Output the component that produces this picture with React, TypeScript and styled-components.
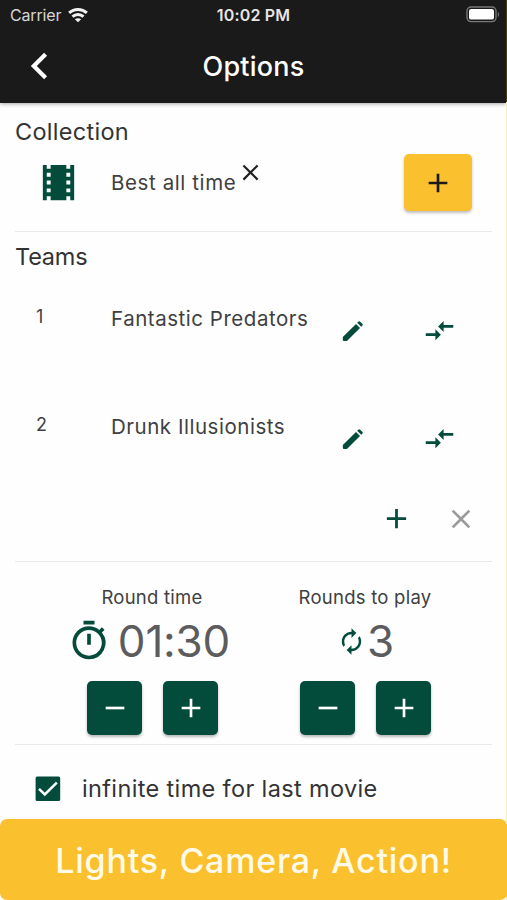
import React from "react";
import styled, { createGlobalStyle } from "styled-components";
import {
  MdAdd,
  MdAutorenew,
  MdClose,
  MdCompareArrows,
  MdOutlineTimer,
  MdRemove,
  MdTheaters,
} from "react-icons/md";

const green = "#034c3c";
const amber = "#fbc02d";

const GlobalStyle = createGlobalStyle`
  * { box-sizing: border-box; }
  body {
    margin: 0;
    background: #fefefe;
    font-family: Inter, "Liberation Sans", sans-serif;
    color: #333335;
  }
  button { border: 0; padding: 0; margin: 0; background: none; font: inherit; color: inherit; }
  svg { display: block; flex: none; }
`;

const Screen = styled.div`
  width: 507px;
  height: 900px;
  display: flex;
  flex-direction: column;
  background: #fefefe;
  border-right: 1px solid #fbecc0;
  border-image: linear-gradient(
      to bottom,
      #4b3b12 103px,
      #fbecc0 103px,
      #fbecc0 823px,
      ${amber} 823px,
      ${amber} 896px,
      #fbecc0 896px
    )
    1;
  overflow: hidden;
`;

const Header = styled.header`
  height: 103px;
  flex: none;
  background: #1a1a1a;
  color: #fff;
  box-shadow: 0 1px 4px rgba(0, 0, 0, 0.35);
`;

const StatusBar = styled.div`
  height: 30px;
  display: grid;
  grid-template-columns: 1fr auto 1fr;
  align-items: center;
  padding: 0 6px 1px 10px;
`;

const Carrier = styled.div`
  display: flex;
  align-items: center;
  gap: 7px;
  font-size: 16px;
  letter-spacing: -0.15px;
  color: #d6d6d6;
`;

const Clock = styled.div`
  margin-left: -3px;
  font-size: 16px;
  font-weight: 600;
  letter-spacing: 0.2px;
  color: #e6e6e6;
`;

const BatterySlot = styled.div`
  display: flex;
  justify-content: flex-end;
`;

const NavBar = styled.div`
  height: 72px;
  display: grid;
  grid-template-columns: 78px 1fr 77px;
  align-items: center;
`;

const BackButton = styled.button`
  display: flex;
  justify-content: center;
`;

const Title = styled.h1`
  margin: 0;
  text-align: center;
  font-size: 27px;
  font-weight: 500;
  letter-spacing: 0.2px;
`;

const Content = styled.main`
  flex: 1;
  min-height: 0;
  padding: 0 14px 0 15px;
`;

const Section = styled.section<{ $height: number }>`
  height: ${(p) => p.$height}px;
  border-bottom: 1px solid #e9e9e9;
`;

const Heading = styled.h2<{ $top: number; $spacing: number }>`
  margin: 0;
  padding-top: ${(p) => p.$top}px;
  font-size: 23.5px;
  line-height: 30px;
  font-weight: 400;
  letter-spacing: ${(p) => p.$spacing}px;
`;

const CollectionRow = styled.div`
  display: flex;
  align-items: center;
  height: 71px;
  padding: 0 20px;
  color: ${green};
`;

const CollectionName = styled.span`
  margin-left: 29px;
  font-size: 20.5px;
  letter-spacing: 0.6px;
  color: #404042;
`;

const RemoveButton = styled.button`
  margin: -20px auto 0 1px;
  color: #222;
`;

const AddCollection = styled.button`
  width: 68px;
  height: 57px;
  display: grid;
  place-items: center;
  border-radius: 5px;
  background: ${amber};
  color: #1a1a1a;
  box-shadow: 0 2px 3px rgba(0, 0, 0, 0.25);
`;

const TeamRow = styled.div`
  display: grid;
  grid-template-columns: 75px 1fr 87px 87px;
  height: 108px;
  padding: 28px 9px 0 21px;
  color: #404042;
`;

const TeamNumber = styled.span`
  font-size: 18px;
  line-height: 34px;
`;

const TeamName = styled.span`
  font-size: 20.5px;
  line-height: 38px;
  letter-spacing: 0.53px;
  white-space: nowrap;
`;

const IconButton = styled.button<{ $muted?: boolean }>`
  height: 61px;
  display: grid;
  place-items: center;
  color: ${(p) => (p.$muted ? "#9b9b9b" : green)};
`;

const TeamActions = styled.div`
  display: flex;
  justify-content: flex-end;
  gap: 32px;
  padding-right: 15px;
`;

const Counters = styled.div`
  display: flex;
  height: 100%;
  padding: 0 20px 0 31px;
`;

const Counter = styled.div`
  flex: 1;
  display: flex;
  flex-direction: column;
  align-items: center;
  padding-top: 20px;
`;

const CounterLabel = styled.div`
  margin-left: -1px;
  font-size: 18.5px;
  line-height: 30px;
  letter-spacing: 0.25px;
  color: #404042;
`;

const CounterValue = styled.div<{ $gap: number; $inset?: number }>`
  height: 58px;
  display: flex;
  align-items: center;
  gap: ${(p) => p.$gap}px;
  padding-right: ${(p) => p.$inset ?? 0}px;
  color: ${green};
`;

const Digits = styled.span`
  font-size: 44px;
  line-height: 58px;
  letter-spacing: -0.2px;
  color: #5c5c5e;
`;

const Stepper = styled.div`
  display: flex;
  gap: 21px;
  margin-top: 11px;
`;

const StepButton = styled.button`
  width: 55px;
  height: 54px;
  display: grid;
  place-items: center;
  border-radius: 5px;
  background: ${green};
  color: #fff;
  box-shadow: 0 2px 3px rgba(0, 0, 0, 0.28);
`;

const Option = styled.label`
  display: flex;
  align-items: center;
  gap: 21px;
  height: 74px;
  padding: 13px 0 0 20px;
  font-size: 23.5px;
  letter-spacing: 0.36px;
`;

const StartButton = styled.button`
  height: 81px;
  flex: none;
  margin-right: -1px;
  padding-top: 1px;
  border-radius: 7px;
  background: ${amber};
  color: #fffbe8;
  font-size: 34px;
  font-weight: 550;
  letter-spacing: 0.78px;
`;

const WifiIcon = () => (
  <svg width="20" height="16" viewBox="0 0 21 16" fill="none" stroke="#f2f2f2" strokeWidth="3.1">
    <path d="M1.2 5.8C6.4.9 14.6.9 19.8 5.8" />
    <path d="M4.7 9.8c3.3-3 8.3-3 11.6 0" />
    <path d="M10.5 15.6l-3.3-3.1c1.9-1.5 4.7-1.5 6.6 0z" fill="#f2f2f2" stroke="none" />
  </svg>
);

const BatteryIcon = () => (
  <svg width="34" height="17" viewBox="0 0 34 17">
    <rect x="1" y="1" width="29" height="14.6" rx="4" fill="none" stroke="#777" strokeWidth="1.4" />
    <rect x="3" y="3" width="25" height="10.6" rx="2.2" fill="#fff" />
    <path d="M31.8 6v5c1.6-.6 1.6-4.4 0-5z" fill="#777" />
  </svg>
);

const BackIcon = () => (
  <svg width="18" height="28" viewBox="0 0 18 28" fill="none" stroke="#fff" strokeWidth="4.2">
    <path d="M15.6 2.2 3.8 14l11.8 11.8" />
  </svg>
);

const PencilIcon = () => (
  <svg width="22" height="22" viewBox="0 0 22 22" fill="currentColor">
    <path d="M.8 17 14 3.9l4 4L4.9 21H2q-1.2 0-1.2-1.2z" />
    <path d="m15.2 2.7 1-1q1-1 2 0l2.1 2.1q1 1 0 2l-1.1 1z" />
  </svg>
);

const CheckboxIcon = () => (
  <svg width="26" height="26" viewBox="0 0 26 26">
    <rect x=".6" y=".4" width="24.6" height="24.6" rx="1.5" fill={green} />
    <path d="m4 12.8 5.8 5.6L21.8 6.6" fill="none" stroke="#fff" strokeWidth="2.5" />
  </svg>
);

const teams = ["Fantastic Predators", "Drunk Illusionists"];

export default function App() {
  return (
    <Screen>
      <GlobalStyle />
      <Header>
        <StatusBar>
          <Carrier>
            Carrier
            <WifiIcon />
          </Carrier>
          <Clock>10:02 PM</Clock>
          <BatterySlot>
            <BatteryIcon />
          </BatterySlot>
        </StatusBar>
        <NavBar>
          <BackButton aria-label="Back">
            <BackIcon />
          </BackButton>
          <Title>Options</Title>
        </NavBar>
      </Header>
      <Content>
        <Section $height={129}>
          <Heading $top={14} $spacing={0.28}>Collection</Heading>
          <CollectionRow>
            <MdTheaters size={47} />
            <CollectionName>Best all time</CollectionName>
            <RemoveButton aria-label="Remove collection">
              <MdClose size={27} />
            </RemoveButton>
            <AddCollection aria-label="Add collection">
              <MdAdd size={32} />
            </AddCollection>
          </CollectionRow>
        </Section>
        <Section $height={330}>
          <Heading $top={10} $spacing={-0.2}>Teams</Heading>
          {teams.map((name, i) => (
            <TeamRow key={name}>
              <TeamNumber>{i + 1}</TeamNumber>
              <TeamName>{name}</TeamName>
              <IconButton aria-label="Edit team">
                <PencilIcon />
              </IconButton>
              <IconButton aria-label="Swap team">
                <MdCompareArrows size={33} />
              </IconButton>
            </TeamRow>
          ))}
          <TeamActions>
            <IconButton aria-label="Add team">
              <MdAdd size={33} />
            </IconButton>
            <IconButton aria-label="Remove team" $muted>
              <MdClose size={32} />
            </IconButton>
          </TeamActions>
        </Section>
        <Section $height={183}>
          <Counters>
            <Counter>
              <CounterLabel>Round time</CounterLabel>
              <CounterValue $gap={7} $inset={8}>
                <MdOutlineTimer size={44} />
                <Digits>01:30</Digits>
              </CounterValue>
              <Stepper>
                <StepButton aria-label="Less time">
                  <MdRemove size={32} />
                </StepButton>
                <StepButton aria-label="More time">
                  <MdAdd size={32} />
                </StepButton>
              </Stepper>
            </Counter>
            <Counter>
              <CounterLabel>Rounds to play</CounterLabel>
              <CounterValue $gap={1}>
                <MdAutorenew size={29} />
                <Digits>3</Digits>
              </CounterValue>
              <Stepper>
                <StepButton aria-label="Fewer rounds">
                  <MdRemove size={32} />
                </StepButton>
                <StepButton aria-label="More rounds">
                  <MdAdd size={32} />
                </StepButton>
              </Stepper>
            </Counter>
          </Counters>
        </Section>
        <Option>
          <CheckboxIcon />
          infinite time for last movie
        </Option>
      </Content>
      <StartButton>Lights, Camera, Action!</StartButton>
    </Screen>
  );
}
